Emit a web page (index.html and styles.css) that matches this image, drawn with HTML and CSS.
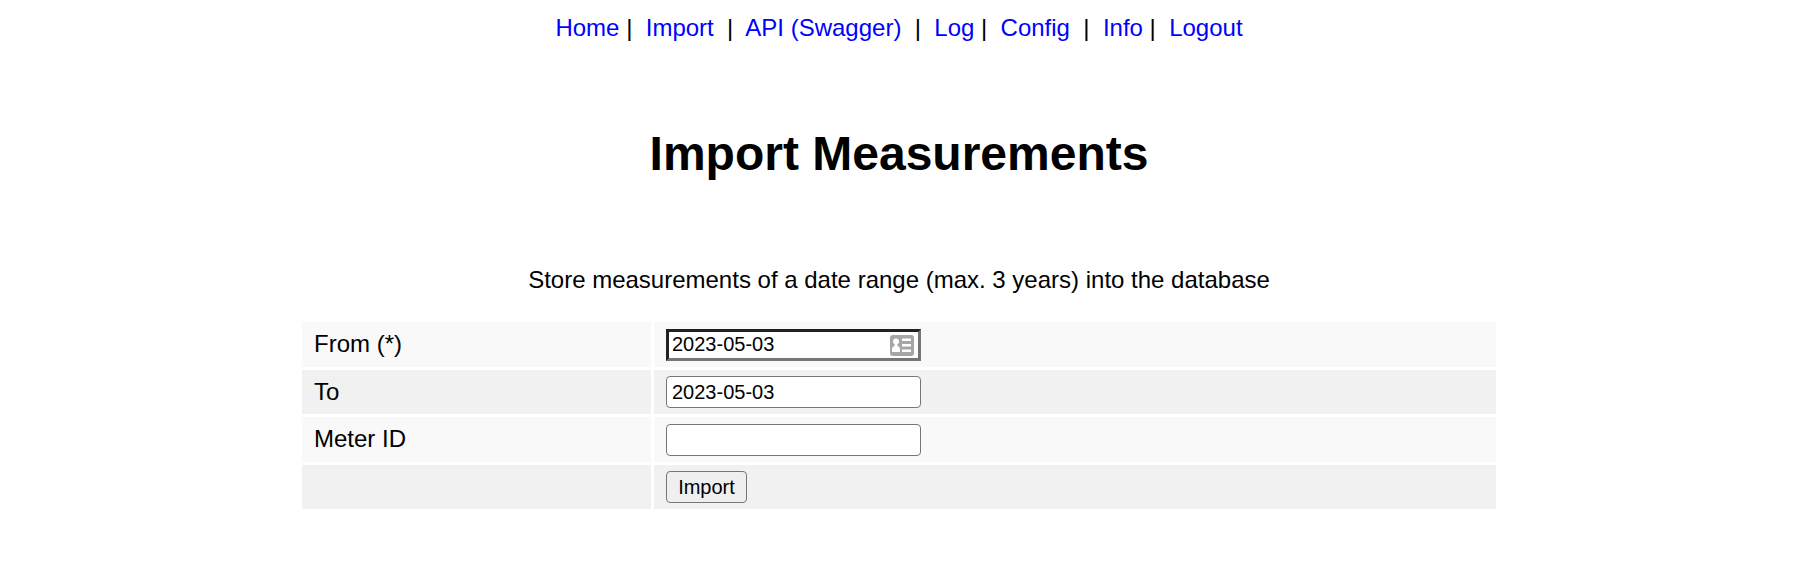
FILE: index.html
```html
<!DOCTYPE html>
<html lang="en">
<head>
<meta charset="utf-8">
<title>Import Measurements</title>
<link rel="stylesheet" href="styles.css">
</head>
<body>
<div class="page">
  <nav class="nav"><a href="#">Home</a> |&nbsp; <a href="#">Import</a> &nbsp;|&nbsp; <a href="#">API (Swagger)</a> &nbsp;|&nbsp; <a href="#">Log</a> |&nbsp; <a href="#">Config</a> &nbsp;|&nbsp; <a href="#">Info</a> |&nbsp; <a href="#">Logout</a></nav>
  <h1 class="title">Import Measurements</h1>
  <p class="intro">Store measurements of a date range (max. 3 years) into the database</p>
  <form class="form">
    <label class="cell name" for="from">From (*)</label>
    <div class="cell value">
      <div class="field">
        <input class="input input-active" id="from" type="text" value="2023-05-03">
        <svg class="card-icon" viewBox="0 0 24 21">
          <rect width="24" height="21" rx="3" fill="#a6a6a6"/>
          <circle cx="6" cy="6.5" r="3" fill="#fff"/>
          <path d="M4.700 8h2.600v2.500L10 13v4H2v-4l2.700-2.500zM12 3.500h9v2.500h-9zM12 9h9v2.500h-9zM12 14.500h9v2.500h-9z" fill="#fff"/>
        </svg>
      </div>
    </div>
    <label class="cell name even" for="to">To</label>
    <div class="cell even"><input class="input" id="to" type="text" value="2023-05-03"></div>
    <label class="cell name" for="meter">Meter ID</label>
    <div class="cell value"><input class="input" id="meter" type="text"></div>
    <div class="cell even"></div>
    <div class="cell even"><button class="button" type="button">Import</button></div>
  </form>
</div>
</body>
</html>
```
FILE: styles.css
```css
body {
  margin: 0;
  background: #fff;
  color: #000;
  font: 24px/27px "Liberation Sans", Arial, sans-serif;
}

.page {
  width: 1194px;
  margin-left: 302px;
  padding-top: 14px;
  text-align: center;
}

.nav a {
  color: #00f;
  text-decoration: none;
}

.title {
  margin: 85px 0;
  font-size: 48px;
  line-height: 55px;
}

.intro {
  margin: 0 0 29px;
}

.form {
  display: grid;
  grid-template-columns: 349px 842px;
  grid-template-rows: 45px 44px 45px 44px;
  gap: 3px;
  text-align: left;
}

.cell {
  display: flex;
  align-items: center;
  padding: 0 12px;
  background: #f9f9f9;
}

.name {
  padding-bottom: 2px;
}

.value {
  padding-top: 1px;
}

.even {
  background: #f1f1f1;
}

.field {
  position: relative;
  display: flex;
}

.input {
  box-sizing: border-box;
  width: 255px;
  height: 32px;
  padding: 0 5px;
  border: 1px solid #767676;
  border-radius: 4px;
  background: #fff;
  color: #000;
  font: 20px "Liberation Sans", Arial, sans-serif;
  outline: none;
}

.input-active {
  padding: 0 3px 2px;
  border: 3px solid;
  border-color: #212121 #767676 #767676 #212121;
  border-radius: 0;
}

.card-icon {
  position: absolute;
  top: 6px;
  right: 7px;
  width: 24px;
  height: 21px;
}

.button {
  box-sizing: border-box;
  width: 81px;
  height: 32px;
  padding: 0;
  border: 1px solid #767676;
  border-radius: 4px;
  background: #efefef;
  color: #000;
  font: 20px "Liberation Sans", Arial, sans-serif;
}
```
